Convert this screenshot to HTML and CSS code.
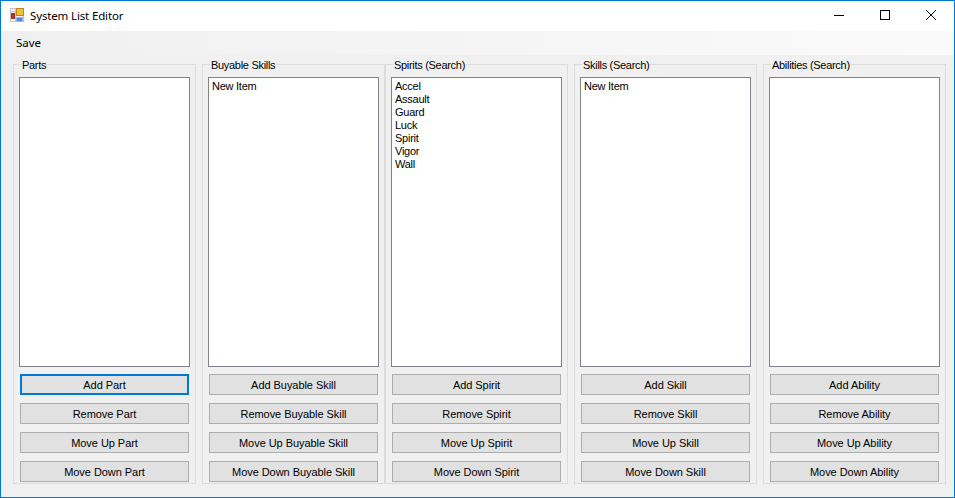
FILE: index.html
```html
<!DOCTYPE html>
<html lang="en">
<head>
  <meta charset="UTF-8">
  <title>System List Editor</title>
  <link rel="stylesheet" href="styles.css">
</head>
<body>
  <div class="window">
    <div class="titlebar">
      <svg class="app-icon" width="14" height="14" viewBox="0 0 14 14">
        <rect x="0.5" y="0.5" width="13" height="13" fill="#f4f4f4" stroke="#c4c4c4"/>
        <path d="M0 3.5H6M5.5 0V14" stroke="#c4c4c4" fill="none"/>
        <rect x="6.5" y="0.5" width="7" height="7" fill="#f2c230" stroke="#b88a20"/>
        <rect x="1.5" y="5.5" width="3" height="5" fill="#c8281e" stroke="#8a3a34"/>
        <rect x="6.5" y="9.5" width="6" height="4" fill="#4f8ae0" stroke="#9ab8e4"/>
      </svg>
      <span class="title">System List Editor</span>
      <div class="caption-buttons">
        <div class="caption-btn">
          <svg width="12" height="12" viewBox="0 0 12 12"><path d="M1 6.5H11" stroke="#000" fill="none"/></svg>
        </div>
        <div class="caption-btn">
          <svg width="12" height="12" viewBox="0 0 12 12"><rect x="1.5" y="1.5" width="9" height="9" stroke="#000" fill="none"/></svg>
        </div>
        <div class="caption-btn">
          <svg width="12" height="12" viewBox="0 0 12 12"><path d="M1 1L11 11M11 1L1 11" stroke="#000" fill="none"/></svg>
        </div>
      </div>
    </div>
    <div class="menubar"><span class="menu-item">Save</span></div>
    <div class="content">
      <fieldset class="group">
        <legend>Parts</legend>
        <div class="list"></div>
        <button class="btn btn-focus">Add Part</button>
        <button class="btn">Remove Part</button>
        <button class="btn">Move Up Part</button>
        <button class="btn">Move Down Part</button>
      </fieldset>
      <fieldset class="group">
        <legend>Buyable Skills</legend>
        <div class="list"><div>New Item</div></div>
        <button class="btn">Add Buyable Skill</button>
        <button class="btn">Remove Buyable Skill</button>
        <button class="btn">Move Up Buyable Skill</button>
        <button class="btn">Move Down Buyable Skill</button>
      </fieldset>
      <fieldset class="group">
        <legend>Spirits (Search)</legend>
        <div class="list">
          <div>Accel</div>
          <div>Assault</div>
          <div>Guard</div>
          <div>Luck</div>
          <div>Spirit</div>
          <div>Vigor</div>
          <div>Wall</div>
        </div>
        <button class="btn">Add Spirit</button>
        <button class="btn">Remove Spirit</button>
        <button class="btn">Move Up Spirit</button>
        <button class="btn">Move Down Spirit</button>
      </fieldset>
      <fieldset class="group">
        <legend>Skills (Search)</legend>
        <div class="list"><div>New Item</div></div>
        <button class="btn">Add Skill</button>
        <button class="btn">Remove Skill</button>
        <button class="btn">Move Up Skill</button>
        <button class="btn">Move Down Skill</button>
      </fieldset>
      <fieldset class="group">
        <legend>Abilities (Search)</legend>
        <div class="list"></div>
        <button class="btn">Add Ability</button>
        <button class="btn">Remove Ability</button>
        <button class="btn">Move Up Ability</button>
        <button class="btn">Move Down Ability</button>
      </fieldset>
    </div>
  </div>
</body>
</html>
```

FILE: styles.css
```css
html, body { margin: 0; padding: 0; }
body { font-family: "Liberation Sans", Arial, sans-serif; font-size: 11px; color: #000; overflow: hidden; }
.window { box-sizing: border-box; width: 955px; height: 498px; border: 1px solid #0078d7; background: #f0f0f0; }

.titlebar { display: flex; align-items: center; height: 30px; background: #fff; }
.app-icon { margin: 0 0 2px 9px; }
.title { margin: 0 0 2px 6px; font-family: "Noto Sans", sans-serif; font-size: 11.5px; letter-spacing: -0.15px; }
.caption-buttons { display: flex; align-self: flex-start; margin-left: auto; }
.caption-btn { display: flex; align-items: center; justify-content: center; width: 46px; height: 28px; }

.menubar { box-sizing: border-box; height: 24px; display: flex; align-items: center; padding: 0 0 2px 15px; background: linear-gradient(to right, #f0f0f0, #fafafa); }
.menu-item { font-family: "Noto Sans", sans-serif; font-size: 11.5px; }

.content { display: flex; padding: 2px 0 0 12px; }
.group { box-sizing: border-box; width: 183px; height: 427px; margin: 0 6px 0 0; padding: 5px 5px 0; border: 1px solid #dcdcdc; min-width: 0; }
.group:nth-child(2) { margin-right: 0; }
.group legend { padding: 2px 1px 0; margin-left: 2px; line-height: 13px; letter-spacing: -0.3px; }

.list { box-sizing: border-box; height: 290px; margin-bottom: 7px; padding: 2px 3px; background: #fff; border: 1px solid #82828c; line-height: 13px; letter-spacing: -0.25px; }

.btn { display: block; box-sizing: border-box; width: 169px; height: 21px; margin: 0 1px 8px; padding: 0; background: #e1e1e1; border: 1px solid #adadad; font: inherit; letter-spacing: -0.05px; color: #000; }
.btn:last-child { margin-bottom: 0; }
.btn-focus { border: 2px solid #0078d7; }
```
